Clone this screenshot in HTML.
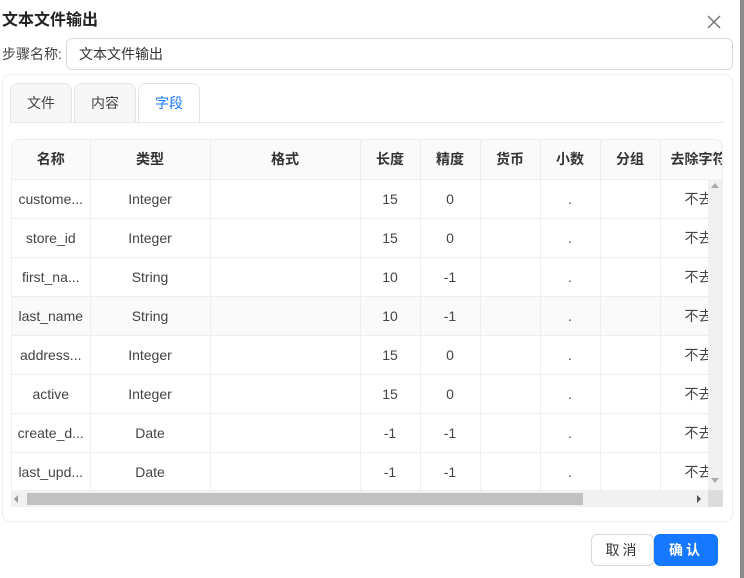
<!DOCTYPE html><html><head><meta charset="utf-8"><style>
*{box-sizing:border-box;margin:0;padding:0}
body{width:744px;height:578px;background:#fff;font-family:"Liberation Sans","Noto Sans CJK SC",sans-serif;font-size:14px;color:#333;position:relative;overflow:hidden}
.a{position:absolute}
.title{left:2px;top:6px;font-size:16px;font-weight:bold;color:#222}
.tab{position:absolute;top:83px;height:40px;width:62px;border:1px solid #e4e4e4;border-bottom:none;border-radius:8px 8px 0 0;background:#f7f7f7;text-align:center;line-height:38px;font-size:14px;color:#444}
table{border-collapse:collapse;table-layout:fixed;font-size:14px}
td,th{border-right:1px solid #eee;border-bottom:1px solid #eee;height:39px;text-align:center;white-space:nowrap;overflow:hidden;color:#444;font-weight:normal}
th{background:#fafafa;font-weight:bold;color:#333;height:39px}
</style></head><body>
<div class="a title">文本文件输出</div>
<div class="a" style="left:706px;top:14px;width:16px;height:16px"><svg width="16" height="16"><path d="M2 2L14 14M14 2L2 14" stroke="#777" stroke-width="1.5"/></svg></div>
<div class="a" style="left:740px;top:0;width:4px;height:578px;background:#8a8a8a"></div>
<div class="a" style="left:2px;top:44px;color:#444">步骤名称:</div>
<div class="a" style="left:66px;top:38px;width:667px;height:32px;border:1px solid #d9d9d9;border-radius:6px;padding-left:12px;line-height:30px;color:#333">文本文件输出</div>
<div class="a" style="left:2px;top:74px;width:731px;height:448px;border:1px solid #eee;border-radius:8px"></div>
<div class="tab" style="left:10px">文件</div>
<div class="tab" style="left:74px">内容</div>
<div class="tab" style="left:138px;background:#fff;color:#1677ff;height:41px">字段</div>
<div class="a" style="left:10px;top:122px;width:714px;height:1px;background:#e8e8e8"></div>
<div class="a" style="left:11px;top:139px;width:712px;height:368px;border:1px solid #eee;border-radius:8px 8px 0 0;overflow:hidden">
<table style="width:778px">
<colgroup><col style="width:78px"><col style="width:120px"><col style="width:150px"><col style="width:60px"><col style="width:60px"><col style="width:60px"><col style="width:60px"><col style="width:60px"><col style="width:130px"></colgroup>
<tr><th>名称</th><th>类型</th><th>格式</th><th>长度</th><th>精度</th><th>货币</th><th>小数</th><th>分组</th><th style="text-align:left;padding-left:10px">去除字符</th></tr>
<tr><td>custome...</td><td>Integer</td><td></td><td>15</td><td>0</td><td></td><td>.</td><td></td><td style="text-align:left;padding-left:24px">不去</td></tr>
<tr><td>store_id</td><td>Integer</td><td></td><td>15</td><td>0</td><td></td><td>.</td><td></td><td style="text-align:left;padding-left:24px">不去</td></tr>
<tr><td>first_na...</td><td>String</td><td></td><td>10</td><td>-1</td><td></td><td>.</td><td></td><td style="text-align:left;padding-left:24px">不去</td></tr>
<tr style="background:#fafafa"><td>last_name</td><td>String</td><td></td><td>10</td><td>-1</td><td></td><td>.</td><td></td><td style="text-align:left;padding-left:24px">不去</td></tr>
<tr><td>address...</td><td>Integer</td><td></td><td>15</td><td>0</td><td></td><td>.</td><td></td><td style="text-align:left;padding-left:24px">不去</td></tr>
<tr><td>active</td><td>Integer</td><td></td><td>15</td><td>0</td><td></td><td>.</td><td></td><td style="text-align:left;padding-left:24px">不去</td></tr>
<tr><td>create_d...</td><td>Date</td><td></td><td>-1</td><td>-1</td><td></td><td>.</td><td></td><td style="text-align:left;padding-left:24px">不去</td></tr>
<tr><td>last_upd...</td><td>Date</td><td></td><td>-1</td><td>-1</td><td></td><td>.</td><td></td><td style="text-align:left;padding-left:24px">不去</td></tr>
</table></div>
<div class="a" style="left:708px;top:179px;width:15px;height:311px;background:#f1f1f1"></div>
<div class="a" style="left:711px;top:183px;border:4px solid transparent;border-bottom:5px solid #aaa;border-top:none"></div>
<div class="a" style="left:711px;top:478px;border:4px solid transparent;border-top:5px solid #aaa;border-bottom:none"></div>
<div class="a" style="left:11px;top:490px;width:712px;height:17px;background:#f1f1f1"></div>
<div class="a" style="left:27px;top:493px;width:556px;height:12px;background:#c1c1c1"></div>
<div class="a" style="left:14px;top:495px;border:4px solid transparent;border-right:4px solid #999;border-left:none"></div>
<div class="a" style="left:697px;top:495px;border:4px solid transparent;border-left:4px solid #555;border-right:none"></div>
<div class="a" style="left:708px;top:490px;width:15px;height:17px;background:#dcdcdc"></div>
<div class="a" style="left:591px;top:534px;width:63px;height:32px;border:1px solid #d9d9d9;border-radius:6px;text-align:center;line-height:30px;color:#333;letter-spacing:3px">取消</div>
<div class="a" style="left:654px;top:534px;width:64px;height:32px;background:#1677ff;border-radius:6px;text-align:center;line-height:32px;color:#fff;font-weight:bold;letter-spacing:3px">确认</div>
</body></html>
